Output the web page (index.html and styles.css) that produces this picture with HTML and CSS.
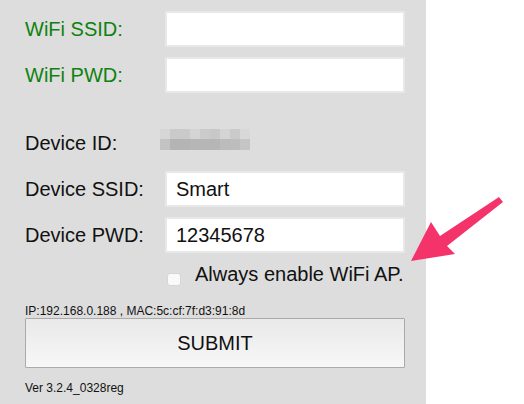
FILE: index.html
```html
<!DOCTYPE html>
<html>
<head>
<meta charset="utf-8">
<link rel="stylesheet" href="styles.css">
</head>
<body>
<div class="stage">
  <form class="panel">
    <div class="row first">
      <label class="lbl green">WiFi SSID:</label>
      <input class="field" type="text">
    </div>
    <div class="row">
      <label class="lbl green">WiFi PWD:</label>
      <input class="field" type="text">
    </div>
    <div class="row spaced">
      <label class="lbl">Device ID:</label>
      <div class="blur"><span class="blur-top"></span><span class="blur-bot"></span></div>
    </div>
    <div class="row">
      <label class="lbl">Device SSID:</label>
      <input class="field" type="text" value="Smart">
    </div>
    <div class="row">
      <label class="lbl">Device PWD:</label>
      <input class="field" type="text" value="12345678">
    </div>
    <div class="check-row">
      <input class="check" type="checkbox">
      <span class="check-text">Always enable WiFi AP.</span>
    </div>
    <div class="info">IP:192.168.0.188 , MAC:5c:cf:7f:d3:91:8d</div>
    <button class="submit" type="button">SUBMIT</button>
    <div class="ver">Ver 3.2.4_0328reg</div>
  </form>
  <svg class="arrow" width="524" height="404" viewBox="0 0 524 404">
    <polygon points="411,261 431,222 440,236 499,197 503,202 447,246 455,254" fill="#f5336b"/>
  </svg>
</div>
</body>
</html>
```
FILE: styles.css
```css
html, body {
  margin: 0;
  padding: 0;
  background: #ffffff;
}
.stage {
  position: relative;
  width: 524px;
  height: 404px;
  overflow: hidden;
  font-family: "Liberation Sans", Arial, sans-serif;
}
.panel {
  width: 426px;
  height: 404px;
  box-sizing: border-box;
  background: #dddddd;
  padding: 11px 0 0 25px;
  margin: 0;
  display: flex;
  flex-direction: column;
}
.row {
  display: flex;
  align-items: center;
  height: 36px;
  margin-top: 10px;
}
.row.first {
  margin-top: 0;
}
.row.spaced {
  margin-top: 32px;
}
.lbl {
  width: 140px;
  flex: none;
  font-size: 20px;
  color: #111111;
}
.lbl.green {
  color: #0e820e;
}
.field {
  box-sizing: border-box;
  width: 240px;
  height: 36px;
  margin: 0;
  padding: 0 9px;
  border: 2px solid #e8e8e8;
  background: #ffffff;
  font-family: "Liberation Sans", Arial, sans-serif;
  font-size: 20px;
  color: #111111;
  outline: none;
}
.blur {
  display: flex;
  flex-direction: column;
  width: 90px;
  height: 21px;
  margin-left: -5px;
  margin-top: -8px;
}
.blur-top {
  height: 10px;
  background: linear-gradient(90deg,
    #d6d6d6 0 10px, #cacaca 10px 30px, #d4d4d4 30px 40px, #cbcbcb 40px 50px,
    #c8c8c8 50px 60px, #d4d4d4 60px 70px, #cacaca 70px 80px, #d8d8d8 80px 90px);
}
.blur-bot {
  height: 11px;
  background: linear-gradient(90deg,
    #c3c3c3 0 10px, #b4b4b4 10px 30px, #b6b6b6 30px 60px, #bcbcbc 60px 70px,
    #bdbdbd 70px 80px, #c5c5c5 80px 90px);
}
.check-row {
  display: flex;
  align-items: center;
  height: 23px;
  margin-top: 10px;
  padding-left: 142px;
}
.check {
  appearance: none;
  -webkit-appearance: none;
  width: 14px;
  height: 13px;
  margin: 9px 14px 0 0;
  border: 1px solid #d6d6d6;
  border-radius: 3px;
  background: #f9f9f9;
  box-sizing: border-box;
}
.check-text {
  font-size: 20px;
  line-height: 23px;
  color: #111111;
}
.info {
  margin-top: 18px;
  font-size: 12px;
  line-height: 14px;
  color: #111111;
}
.submit {
  box-sizing: border-box;
  width: 380px;
  height: 50px;
  margin: 0;
  border: 1px solid #aaaaaa;
  border-radius: 1px;
  background: linear-gradient(#e9e9e9, #f7f7f7);
  font-family: "Liberation Sans", Arial, sans-serif;
  font-size: 20px;
  color: #111111;
  padding: 0;
}
.ver {
  margin-top: 13px;
  font-size: 12px;
  line-height: 14px;
  color: #111111;
}
.arrow {
  position: absolute;
  left: 0;
  top: 0;
  pointer-events: none;
}
```
